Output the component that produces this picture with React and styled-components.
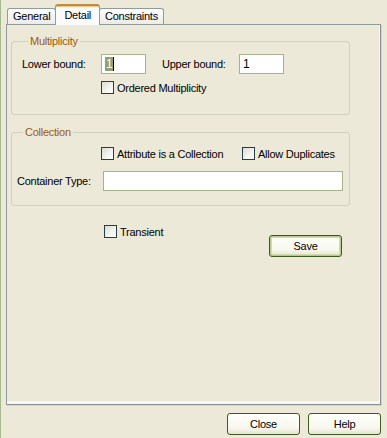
import React from "react";
import styled, { createGlobalStyle, css } from "styled-components";

const GlobalStyle = createGlobalStyle`
  html, body {
    margin: 0;
    padding: 0;
    background: #ece9d8;
  }
  body {
    font-family: "Liberation Sans", Arial, sans-serif;
    font-size: 11px;
    letter-spacing: -0.25px;
    color: #000;
  }
`;

const Window = styled.div`
  width: 387px;
  height: 438px;
  box-sizing: border-box;
  border-left: 1px solid #a5b98c;
  background: #ece9d8;
  display: flex;
  flex-direction: column;
  padding: 0 6px 0 5px;
  white-space: nowrap;
`;

const TabStrip = styled.div`
  display: flex;
  align-items: flex-end;
  height: 24px;
  padding-left: 1px;
`;

const Tab = styled.div`
  position: relative;
  box-sizing: border-box;
  height: 16px;
  padding: 0 5px;
  display: flex;
  align-items: center;
  border: 1px solid #919b9c;
  border-bottom: none;
  border-radius: 3px 3px 0 0;
  background: linear-gradient(#ffffff, #ecebe6);
  line-height: 13px;

  ${({ $active }) =>
    $active &&
    css`
      z-index: 2;
      height: 21px;
      margin: 0 -1px -1px -1px;
      padding: 3px 8px 0 8px;
      align-items: flex-start;
      background: #fcfcfe;
      border-top: 2px solid #c08a48;
      border-color: #919b9c;
      border-top-color: #c08a48;
      box-shadow: inset 0 1px 0 #f2c27a;
    `}
`;

const Panel = styled.div`
  position: relative;
  z-index: 1;
  box-sizing: border-box;
  height: 381px;
  border: 1px solid #919b9c;
  border-right-color: #8a9092;
  border-bottom-color: #8a9092;
  box-shadow: inset -1px -3px 0 #f7f6f2, 1px 1px 0 #d5d3c6;
  background: #ece9d8;
  padding: 10px 30px 0 4px;
  display: flex;
  flex-direction: column;
`;

const Group = styled.fieldset`
  margin: ${({ $mt }) => $mt || 0}px 0 0 0;
  border: 1px solid #d0d0bf;
  border-radius: 3px;
  padding: ${({ $pad }) => $pad};
  display: flex;
  flex-direction: column;
  min-width: 0;
`;

const Legend = styled.legend`
  color: #9c5a0a;
  padding: 0 2px;
  margin-left: 6px;
  line-height: 13px;
`;

const Row = styled.div`
  display: flex;
  align-items: center;
  margin-top: ${({ $mt }) => $mt || 0}px;
`;

const Label = styled.span`
  width: ${({ $w }) => $w}px;
  margin-left: ${({ $ml }) => $ml || 0}px;
  flex: none;
`;

const TextBox = styled.div`
  box-sizing: border-box;
  width: ${({ $w }) => ($w ? `${$w}px` : "auto")};
  flex: ${({ $w }) => ($w ? "none" : "1")};
  height: 20px;
  border: 1px solid #a5b28c;
  background: #fff;
  display: flex;
  align-items: center;
  padding-left: 3px;
  font-size: 12px;
`;

const Selected = styled.span`
  background: #93a070;
  color: #fff;
  padding: 0 1px;
  line-height: 14px;
  border-right: 1px solid #000;
`;

const CheckWrap = styled.label`
  display: flex;
  align-items: center;
  gap: 3px;
  flex: none;
  width: ${({ $w }) => ($w ? `${$w}px` : "auto")};
  margin-left: ${({ $ml }) => $ml || 0}px;
`;

const Box = styled.span`
  box-sizing: border-box;
  width: 13px;
  height: 13px;
  flex: none;
  border: 1px solid #21404c;
  background: linear-gradient(135deg, #dcdcd5 0%, #f4f4f0 60%, #ffffff 100%);
`;

const Check = ({ children, ml, w }) => (
  <CheckWrap $ml={ml} $w={w}>
    <Box />
    <span>{children}</span>
  </CheckWrap>
);

const BottomRow = styled.div`
  display: flex;
  align-items: flex-start;
  padding-left: 93px;
  margin-top: 19px;
`;

const Button = styled.button`
  box-sizing: border-box;
  width: 73px;
  height: 22px;
  font-family: inherit;
  font-size: 11px;
  letter-spacing: inherit;
  color: #000;
  border: 1px solid #3d5c1e;
  border-radius: 3px;
  background: linear-gradient(#fffffb 0%, #f8f7ef 70%, #e6e3d3 100%);
  padding: 0;
  box-shadow: ${({ $default }) =>
    $default ? "inset 0 0 0 1px #b8c98e, inset 0 0 0 2px #d2dcaf" : "none"};
`;

const SaveButton = styled(Button)`
  margin: 10px 8px 0 auto;
`;

const Footer = styled.div`
  display: flex;
  justify-content: flex-end;
  gap: 8px;
  margin-top: 8px;
`;

export default function App() {
  return (
    <>
      <GlobalStyle />
      <Window>
        <TabStrip>
          <Tab>General</Tab>
          <Tab $active>Detail</Tab>
          <Tab>Constraints</Tab>
        </TabStrip>
        <Panel>
          <Group $pad="6px 10px 20px 10px">
            <Legend>Multiplicity</Legend>
            <Row>
              <Label $w={79}>Lower bound:</Label>
              <TextBox $w={45}>
                <Selected>1</Selected>
              </TextBox>
              <Label $w={77} $ml={16}>
                Upper bound:
              </Label>
              <TextBox $w={45}>1</TextBox>
            </Row>
            <Row $mt={7}>
              <Check ml={79}>Ordered Multiplicity</Check>
            </Row>
          </Group>
          <Group $mt={11} $pad="8px 6px 14px 5px">
            <Legend>Collection</Legend>
            <Row>
              <Check ml={84} w={141}>
                Attribute is a Collection
              </Check>
              <Check>Allow Duplicates</Check>
            </Row>
            <Row $mt={11}>
              <Label $w={86}>Container Type:</Label>
              <TextBox />
            </Row>
          </Group>
          <BottomRow>
            <Check>Transient</Check>
            <SaveButton $default>Save</SaveButton>
          </BottomRow>
        </Panel>
        <Footer>
          <Button>Close</Button>
          <Button>Help</Button>
        </Footer>
      </Window>
    </>
  );
}
